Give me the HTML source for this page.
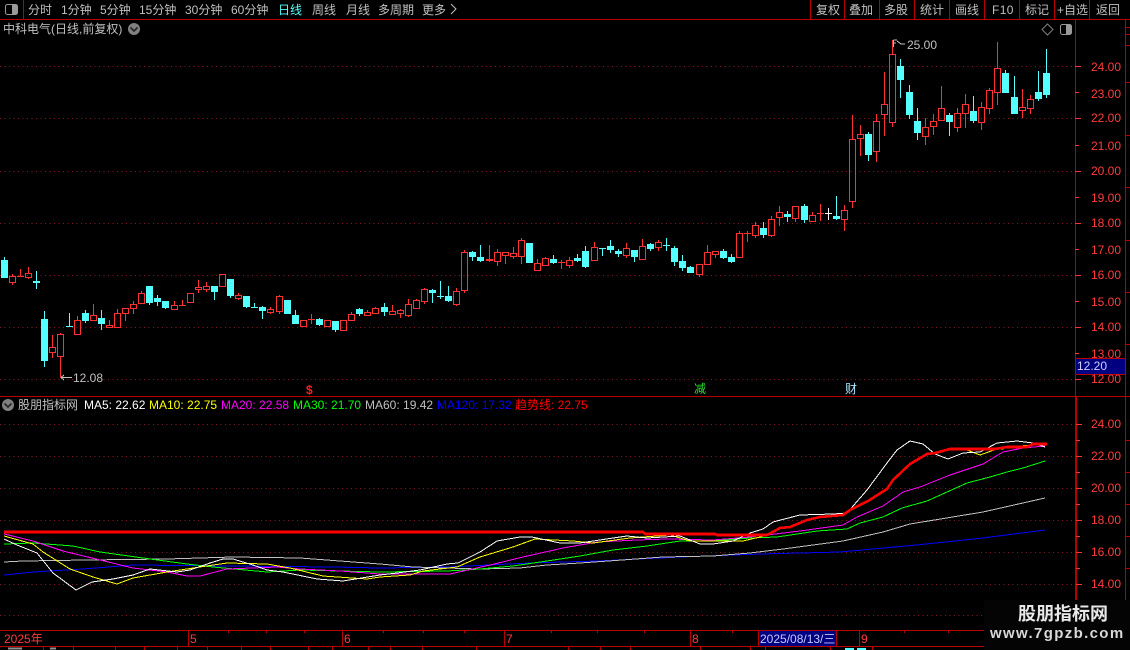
<!DOCTYPE html>
<html><head><meta charset="utf-8"><style>
html,body{margin:0;padding:0;background:#000;}
#r{position:relative;width:1130px;height:650px;overflow:hidden;background:#000;font:12px/14px "Liberation Sans","WenQuanYi Zen Hei","Noto Sans CJK SC",sans-serif;color:#c0c0c0;}
#r svg{position:absolute;left:0;top:0;}
.t{position:absolute;white-space:nowrap;}
.a{color:#ff3c3c;}
</style></head><body><div id="r">
<svg id="s" width="1130" height="650" viewBox="0 0 1130 650" shape-rendering="crispEdges">
<g stroke="#8a1c1c" stroke-width="1" stroke-dasharray="1 3.5" fill="none">
<path d="M0 66.5H1075M0 118.5H1075M0 171.5H1075M0 223.5H1075M0 275.5H1075M0 327.5H1075M0 379.5H1075"/>
<path d="M0 424.5H1075M0 456.5H1075M0 488.5H1075M0 520.5H1075M0 552.5H1075M0 584.5H1075M0 615.5H1075"/>
</g>
<g stroke="#b80000" fill="none">
<path d="M0 19.5H1130M0 396.5H1130M0 630.5H1075M0 646.5H1130"/>
<path d="M23.5 0V19M810.5 0V19M844.5 0V19M879.5 0V19M914.5 0V19M949.5 0V19M984.5 0V19M1019.5 0V19M1054.5 0V19M1089.5 0V19"/>
<path d="M1075.5 19V630M1076.5 397V630M1125.5 19V600"/>
<path d="M188.5 630V646M342.5 630V646M504.5 630V646M690.5 630V646M859.5 630V646"/>
<path d="M228.5 630V633M266.5 630V633M304.5 630V633M383.5 630V633M423.5 630V633M464.5 630V633M551.5 630V633M597.5 630V633M644.5 630V633M732.5 630V633M904.5 630V633M948.5 630V633"/>
<path d="M43.5 646V650M73.5 646V650M115.5 646V650M144.5 646V650M177.5 646V650M207.5 646V650M241.5 646V650M270.5 646V650M308.5 646V650M332.5 646V650M368.5 646V650M390.5 646V650M422.5 646V650M476.5 646V650M568.5 646V650M600.5 646V650M630.5 646V650M700.5 646V650M750.5 646V650M765.5 646V650M830.5 646V650M872.5 646V650"/>
<path d="M1126 27.5H1130M1126 34.5H1130M1126 45.5H1130M1126 82.5H1130M1126 135.5H1130M1126 187.5H1130M1126 240.5H1130M1126 292.5H1130M1126 344.5H1130M1126 440.5H1130M1126 472.5H1130M1126 504.5H1130M1126 536.5H1130M1126 568.5H1130"/>
</g>
<path d="M8 648.5H22M50 648.5H56" stroke="#909090" stroke-width="2" fill="none"/>
<path d="M845 649H854M857 649H866" stroke="#54ffff" stroke-width="2" fill="none"/>
<g stroke="#ff3232" fill="none">
<path d="M1075 66.5H1081M1075 118.5H1081M1075 171.5H1081M1075 223.5H1081M1075 275.5H1081M1075 327.5H1081M1075 379.5H1081M1075 92.5H1079M1075 145.5H1079M1075 197.5H1079M1075 249.5H1079M1075 301.5H1079M1075 353.5H1079"/>
<path d="M1076 424.5H1082M1076 456.5H1082M1076 488.5H1082M1076 520.5H1082M1076 552.5H1082M1076 584.5H1082M1076 440.5H1080M1076 472.5H1080M1076 504.5H1080M1076 536.5H1080M1076 568.5H1080"/>
</g>
<g fill="none" stroke-width="1">
<polyline stroke="#0000ff" points="4,575 33,572 83,569 133,565 333,567 380,568 447,567 530,563 597,561 680,557 760,554 840,552 917,545 983,538 1045,530"/>
<polyline stroke="#c0c0c0" points="4,562 23,561 87,560 167,559 233,557 300,558 380,564 413,567 480,569 520,568 547,565 580,563 622,560 663,557 713,556 750,553 783,549 843,541 883,532 910,524 983,512 1045,498"/>
<polyline stroke="#00ff00" points="4,544 33,543 73,546 100,552 143,558 187,564 213,567 267,572 300,570 380,572 447,571 480,569 513,566 547,561 580,556 613,550 647,546 680,541 713,541 750,538 777,537 817,531 847,529 860,523 883,517 902,508 927,501 967,483 990,477 1007,472 1023,468 1045,461"/>
<polyline stroke="#ff00ff" points="4,534 33,541 63,551 100,560 133,568 167,572 187,576 200,576 227,569 277,567 300,569 340,571 380,574 450,574 490,565 523,557 563,548 597,542 637,540 667,539 713,540 750,537 800,531 843,525 857,517 883,506 903,492 920,487 950,475 983,464 1003,452 1023,448 1045,446"/>
<polyline stroke="#ffff00" points="4,536 33,544 43,552 70,569 93,577 117,584 133,578 167,572 200,567 227,563 267,564 290,568 323,576 367,579 380,577 410,575 423,571 457,567 480,557 513,547 535,539 573,541 593,543 630,538 670,535 690,541 743,541 760,537 767,535 780,528 790,527 807,520 820,517 843,515 850,510 868,501 887,489 893,480 910,464 927,454 935,453 950,449 967,450 980,455 997,449 1003,449 1007,447 1033,445 1045,444"/>
<polyline stroke="#ffffff" points="4,539 17,545 37,553 53,573 76,590 92,582 113,579 133,575 150,569 177,572 190,570 210,563 223,559 233,559 253,565 267,570 283,572 317,579 343,581 380,575 397,573 420,570 447,564 458,563 480,552 497,541 520,537 532,537 560,543 580,543 613,538 627,536 647,538 680,536 700,544 713,544 733,541 750,533 763,529 773,522 800,515 833,514 847,513 867,490 887,463 897,450 910,441 923,444 935,454 948,459 963,453 980,452 997,443 1017,441 1033,443 1045,447"/>
<polyline stroke="#ff0000" stroke-width="2.6" points="4,532 643,532 645,534 715,534 717,535 767,535 780,528 790,527 807,520 820,517 843,515 850,510 868,501 887,489 893,480 910,464 927,454 935,453 950,449 995,449 1007,447 1027,447 1033,444 1047,444"/>
</g>
<rect x="758.5" y="630.5" width="78" height="16" fill="#000080" stroke="#b80000"/>
<rect x="1075.5" y="358.5" width="50" height="16" fill="#000080" stroke="#b80000"/>
<g fill="none" stroke="#c0c0c0">
<path d="M61 377.5H72M61 377.5L64 375M61 377.5L64 380"/>
<path d="M893.5 40V47M893.5 40H897M893.5 43H896M897 41L901 44H905"/>
</g>
<g shape-rendering="auto">
<rect x="5.5" y="4.5" width="12" height="10" rx="2" fill="none" stroke="#9a9a9a"/><rect x="12" y="5" width="5" height="9" fill="#9a9a9a"/>
<rect x="1060.5" y="24.5" width="11" height="10" rx="2" fill="none" stroke="#9a9a9a"/><rect x="1066" y="25" width="5" height="9" fill="#9a9a9a"/>
<path d="M1047.5 24L1053 29.5L1047.5 35L1042 29.5Z" fill="none" stroke="#808080"/>
<circle cx="134" cy="29" r="6" fill="#808080"/><path d="M130.5 27.5L134 31L137.5 27.5" fill="none" stroke="#222" stroke-width="1.6"/>
<circle cx="8" cy="405" r="6" fill="#808080"/><path d="M4.5 403.5L8 407L11.5 403.5" fill="none" stroke="#222" stroke-width="1.6"/>
<path d="M451 4L456 9L451 14" fill="none" stroke="#c0c0c0"/>
</g>
<rect x="984" y="600" width="146" height="50" fill="#040404"/>
</svg>
<span class="t" style="left:28px;top:3px">分时</span>
<span class="t" style="left:61px;top:3px">1分钟</span>
<span class="t" style="left:100px;top:3px">5分钟</span>
<span class="t" style="left:139px;top:3px">15分钟</span>
<span class="t" style="left:185px;top:3px">30分钟</span>
<span class="t" style="left:231px;top:3px">60分钟</span>
<span class="t" style="left:278px;top:3px;color:#54ffff">日线</span>
<span class="t" style="left:312px;top:3px">周线</span>
<span class="t" style="left:346px;top:3px">月线</span>
<span class="t" style="left:378px;top:3px">多周期</span>
<span class="t" style="left:422px;top:3px">更多</span>
<span class="t" style="left:816px;top:3px">复权</span>
<span class="t" style="left:849px;top:3px">叠加</span>
<span class="t" style="left:884px;top:3px">多股</span>
<span class="t" style="left:920px;top:3px">统计</span>
<span class="t" style="left:955px;top:3px">画线</span>
<span class="t" style="left:992px;top:3px;letter-spacing:.4px">F10</span>
<span class="t" style="left:1025px;top:3px">标记</span>
<span class="t" style="left:1057px;top:3px">+自选</span>
<span class="t" style="left:1096px;top:3px">返回</span>
<span class="t" style="left:3px;top:22px">中科电气(日线,前复权)</span>
<span class="t" style="left:907px;top:38px;">25.00</span>
<span class="t" style="left:73px;top:371px;">12.08</span>
<span class="t a" style="left:1091px;top:60px">24.00</span>
<span class="t a" style="left:1091px;top:87px">23.00</span>
<span class="t a" style="left:1091px;top:111px">22.00</span>
<span class="t a" style="left:1091px;top:139px">21.00</span>
<span class="t a" style="left:1091px;top:164px">20.00</span>
<span class="t a" style="left:1091px;top:191px">19.00</span>
<span class="t a" style="left:1091px;top:216px">18.00</span>
<span class="t a" style="left:1091px;top:243px">17.00</span>
<span class="t a" style="left:1091px;top:268px">16.00</span>
<span class="t a" style="left:1091px;top:295px">15.00</span>
<span class="t a" style="left:1091px;top:320px">14.00</span>
<span class="t a" style="left:1091px;top:347px">13.00</span>
<span class="t a" style="left:1091px;top:372px">12.00</span>
<span class="t" style="left:1077px;top:359px;color:#d0d0ff">12.20</span>
<span class="t a" style="left:1091px;top:417px">24.00</span>
<span class="t a" style="left:1091px;top:449px">22.00</span>
<span class="t a" style="left:1091px;top:481px">20.00</span>
<span class="t a" style="left:1091px;top:513px">18.00</span>
<span class="t a" style="left:1091px;top:545px">16.00</span>
<span class="t a" style="left:1091px;top:577px">14.00</span>
<span class="t" style="left:306px;top:383px;color:#ff2020;font-weight:bold">$</span>
<span class="t" style="left:694px;top:382px;color:#30e030">减</span>
<span class="t" style="left:845px;top:382px;color:#a8e8ff">财</span>
<span class="t" style="left:18px;top:398px">股朋指标网</span>
<span class="t" style="left:84px;top:398px;color:#fff">MA5: 22.62</span>
<span class="t" style="left:149px;top:398px;color:#ff0">MA10: 22.75</span>
<span class="t" style="left:221px;top:398px;color:#f0f">MA20: 22.58</span>
<span class="t" style="left:293px;top:398px;color:#0f0">MA30: 21.70</span>
<span class="t" style="left:365px;top:398px;color:#c0c0c0">MA60: 19.42</span>
<span class="t" style="left:437px;top:398px;color:#00f">MA120: 17.32</span>
<span class="t" style="left:515px;top:398px;color:#f00">趋势线: 22.75</span>
<span class="t a" style="left:4px;top:632px">2025年</span>
<span class="t a" style="left:190px;top:632px">5</span>
<span class="t a" style="left:344px;top:632px">6</span>
<span class="t a" style="left:506px;top:632px">7</span>
<span class="t a" style="left:692px;top:632px">8</span>
<span class="t a" style="left:861px;top:632px">9</span>
<span class="t" style="left:760px;top:632px;color:#c8c8ff">2025/08/13/三</span>
<span class="t" style="left:1018px;top:604px;color:#e8e8e8;font-size:18px;line-height:20px;font-weight:bold">股朋指标网</span>
<span class="t" style="left:990px;top:625px;color:#d8d8d8;font-size:15px;line-height:18px;font-weight:bold;letter-spacing:1.35px">www.7gpzb.com</span>
<script>
var d=[[260,277,257,277,0],[276,282,274,284,1],[276,276,269,276,1],[273,277,267,278,1],[281,282,271,288,0],[319,360,311,366,0],[347,352,335,357,1],[334,356,333,377,1],[326,326,313,326,0],[320,334,316,334,1],[313,320,310,322,0],[315,320,304,320,1],[318,323,310,329,0],[325,327,320,327,1],[313,327,309,327,1],[308,313,308,320,1],[304,308,301,313,1],[293,303,291,303,1],[286,302,286,304,0],[298,301,295,305,0],[301,307,301,308,0],[305,309,301,309,1],[305,305,300,305,1],[293,302,293,302,1],[287,289,280,292,1],[286,289,282,291,1],[286,291,286,299,0],[274,286,274,286,1],[279,295,279,297,0],[295,298,293,299,1],[296,306,296,307,0],[307,307,303,307,0],[307,310,306,318,0],[309,312,307,313,1],[296,311,295,313,1],[300,313,300,313,0],[315,323,310,323,0],[320,326,320,326,1],[319,319,314,323,1],[319,324,318,325,0],[320,326,320,326,1],[321,329,321,331,0],[320,330,320,330,1],[314,320,312,320,1],[309,313,308,315,0],[312,315,310,315,1],[308,313,307,313,1],[307,311,303,315,0],[311,314,305,314,1],[310,313,309,317,1],[304,315,299,316,1],[300,308,299,308,1],[289,301,288,303,1],[290,292,289,302,0],[296,296,281,298,0],[296,300,286,301,0],[291,304,288,305,1],[252,290,250,292,1],[252,256,251,260,0],[257,260,245,261,0],[259,260,245,261,1],[252,261,249,265,1],[252,255,252,263,1],[253,256,247,258,1],[240,256,238,263,1],[243,262,243,262,0],[263,270,259,270,1],[258,265,257,265,1],[259,262,255,263,0],[262,262,260,268,1],[260,265,257,267,1],[258,260,254,261,0],[251,266,246,267,0],[247,260,242,260,1],[248,248,248,255,0],[246,249,240,252,0],[251,253,249,256,0],[248,255,243,257,1],[250,256,250,261,0],[246,259,239,259,1],[244,248,243,250,0],[242,247,240,250,1],[245,245,238,250,0],[248,261,246,265,0],[261,267,255,270,0],[267,272,266,272,0],[264,274,264,276,1],[252,264,245,264,1],[251,254,251,257,1],[251,257,249,258,0],[257,261,254,262,0],[233,257,231,257,1],[233,233,231,241,1],[225,235,222,237,1],[228,234,222,237,0],[219,235,216,236,1],[212,217,206,225,1],[214,216,211,221,0],[206,218,206,221,1],[206,219,204,222,0],[215,221,212,221,1],[213,213,204,220,1],[213,213,208,219,2],[216,218,196,219,0],[210,219,205,230,1],[139,201,115,207,1],[134,138,125,155,1],[134,154,132,160,0],[121,151,114,161,1],[104,114,72,135,1],[54,122,40,126,1],[66,79,59,97,0],[92,114,85,118,0],[121,132,108,139,0],[127,136,118,144,1],[121,126,114,134,1],[108,120,86,120,1],[115,121,113,135,0],[113,127,108,131,1],[104,113,94,127,1],[111,120,96,122,0],[107,122,102,129,1],[90,108,88,113,1],[68,92,42,104,1],[73,92,70,92,0],[97,113,76,113,0],[107,110,89,117,1],[99,108,95,113,1],[92,98,71,100,0],[73,94,49,97,0]];
var red="",cy="",wh="",cf="";
for(var i=0;i<d.length;i++){var c=d[i],x=Math.floor(4.4+8.077*i)+.5,t=c[0],b=c[1],h=c[2],l=c[3],k=c[4],w="";
if(h<t)w+="M"+x+" "+h+"V"+t;if(l>b)w+="M"+x+" "+b+"V"+(l+1);
if(b-t<=1){w+="M"+(x-3.5)+" "+(t+.5)+"H"+(x+3.5);if(b-t==1)w+="M"+(x-3.5)+" "+(b+.5)+"H"+(x+3.5);}
else if(k==1){w+="M"+(x-3)+" "+(t+.5)+"H"+(x+3)+"V"+(b+.5)+"H"+(x-3)+"Z";}
else{cf+="M"+(x-3.5)+" "+t+"H"+(x+3.5)+"V"+(b+1)+"H"+(x-3.5)+"Z";}
if(k==1)red+=w;else if(k==2)wh+=w;else cy+=w;}
var s=document.getElementById("s"),n="http://www.w3.org/2000/svg",bg=s.querySelector("polyline").parentNode;
function a(dd,st,f){var p=document.createElementNS(n,"path");p.setAttribute("d",dd);p.setAttribute("fill",f||"none");if(st)p.setAttribute("stroke",st);s.insertBefore(p,bg);}
a(cf,null,"#54ffff");a(cy,"#54ffff");a(red,"#ff3232");a(wh,"#ffffff");
</script>
</div></body></html>
